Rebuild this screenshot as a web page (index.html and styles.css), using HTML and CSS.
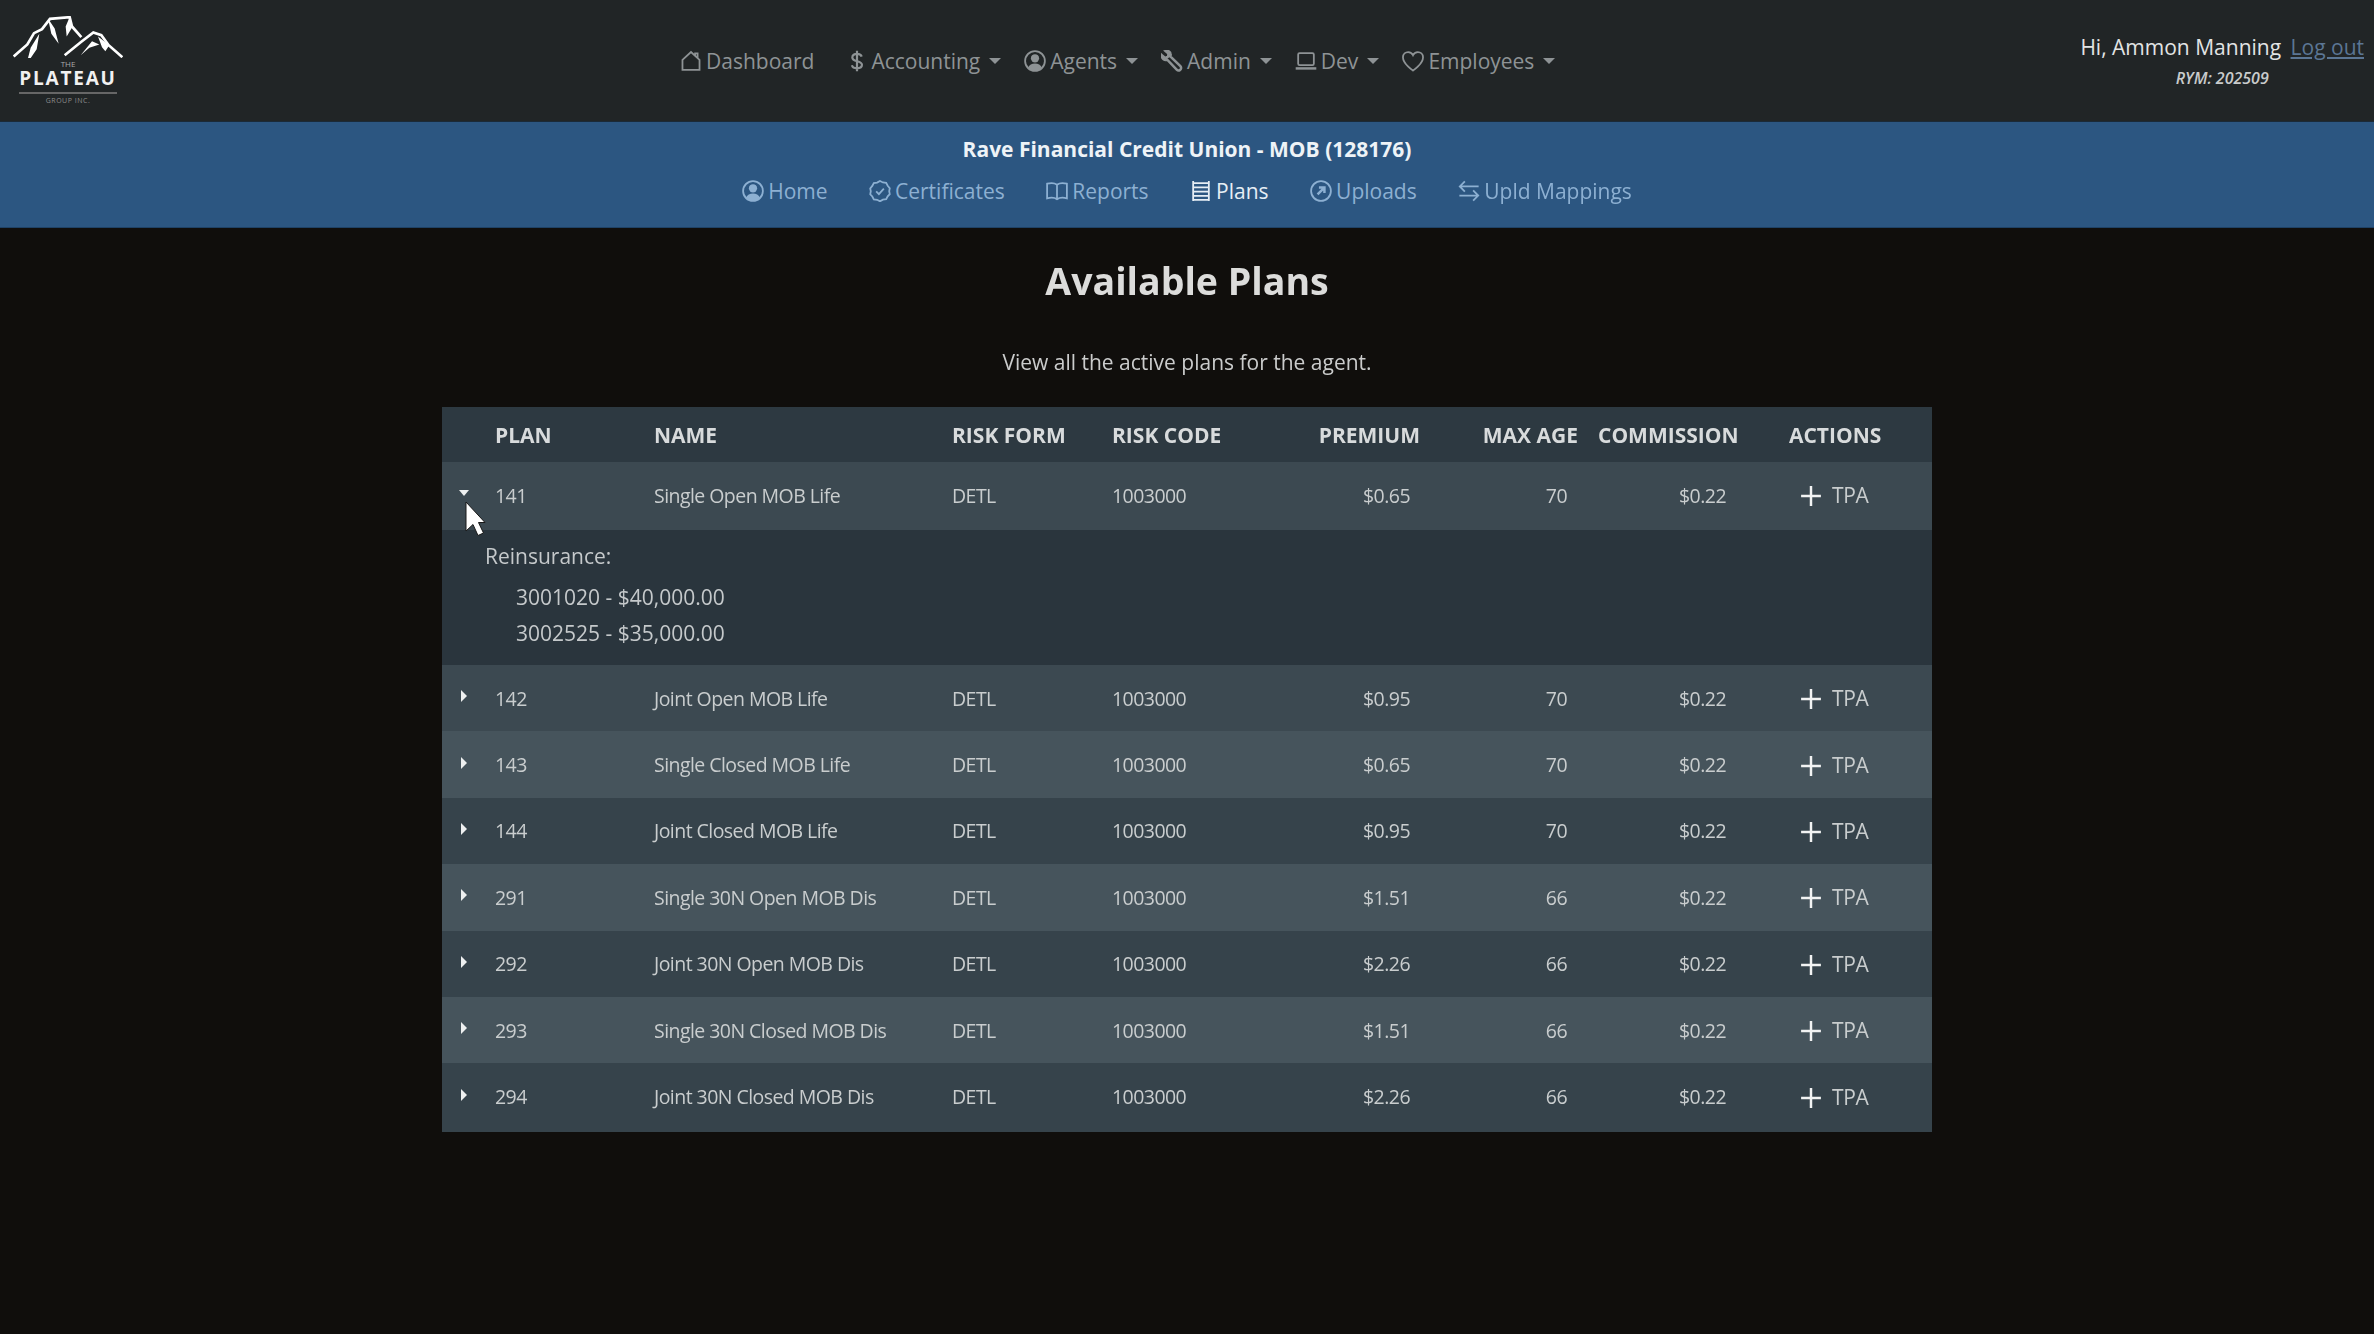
FILE: index.html
```html
<!DOCTYPE html>
<html>
<head>
<meta charset="utf-8">
<title>Available Plans</title>
<link rel="stylesheet" href="styles.css">
</head>
<body>
<svg class="sprites" width="0" height="0">
  <symbol id="i-house" viewBox="0 0 16 16"><path d="M1.800 7.200 8 1.500l6.200 5.700V14.500H1.800zM11 4.200V2.400h1.800v3.400"/></symbol>
  <symbol id="i-dollar" viewBox="0 0 16 16"><path d="M11.400 4.800C11 3.300 9.600 2.800 8 2.800c-1.900 0-3.400.9-3.400 2.600 0 3.600 7 2 7 5.400 0 1.700-1.600 2.500-3.600 2.500-1.800 0-3.300-.7-3.700-2.200M8 .5v15"/></symbol>
  <symbol id="i-person" viewBox="0 0 16 16"><circle cx="8" cy="8" r="7.200"/><circle class="solid" cx="8" cy="6" r="3"/><path class="solid" d="M2.800 13c.9-2.200 3-3.200 5.200-3.200s4.300 1 5.200 3.200A7.200 7.200 0 0 1 8 15.200 7.200 7.200 0 0 1 2.800 13z"/></symbol>
  <symbol id="i-wrench" viewBox="0 0 16 16"><path class="thick" d="M.6 3.700 3 5.700l2.200-.9.2-2.200L3.300.8c1.600-.5 3.500.3 3.700 2.100.1.700 0 1.300-.2 1.800l7.300 7c.9 1 .6 2.200-.2 2.800-.8.600-1.800.5-2.500-.2L4.500 7.100C2.400 7.700.3 6.200.6 3.700z"/></symbol>
  <symbol id="i-laptop" viewBox="0 0 16 16"><rect x="2.300" y="2.300" width="11.400" height="8.700" rx="1"/><path class="thick" d="M.5 13.400h15"/></symbol>
  <symbol id="i-heart" viewBox="0 0 16 16"><path d="M8 15S.7 10.200.7 5.300C.7 2.800 2.600 1.500 4.500 1.500 6 1.500 7.300 2.300 8 3.800c.7-1.500 2-2.300 3.500-2.300 1.900 0 3.800 1.300 3.800 3.800C15.300 10.200 8 15 8 15z"/></symbol>
  <symbol id="i-check" viewBox="0 0 16 16"><path d="M8 .7l2.100 1.100 2.400.3 1.100 2.100 1.500 1.800-.4 2.100.4 2.200-1.500 1.600-1.100 2.100-2.400.3L8 15.500l-2.100-1.100-2.400-.3-1.100-2.100-1.500-1.600.4-2.200-.4-2.100 1.500-1.800 1.100-2.100 2.400-.3z"/><path d="M5.200 8.300l2 2 3.600-4"/></symbol>
  <symbol id="i-book" viewBox="0 0 16 16"><path d="M8 3.400C6.500 2.300 3.300 2.100.8 2.700v10.600c2.500-.6 5.700-.4 7.200.7 1.500-1.100 4.700-1.300 7.200-.7V2.700C12.700 2.100 9.500 2.300 8 3.400zM8 3.400V14"/></symbol>
  <symbol id="i-ladder" viewBox="0 0 16 16"><path d="M2.300.8v14.400M13.700.8v14.400M2.300 2.200h11.400M2.300 5.300h11.400M2.300 8.400h11.400M2.300 11.500h11.400M2.300 14.500h11.400"/></symbol>
  <symbol id="i-upload" viewBox="0 0 16 16"><circle cx="8" cy="8" r="7.200"/><path class="thick" d="M5.500 10.500 10.300 5.700M6.500 5.500h4v4"/></symbol>
  <symbol id="i-swap" viewBox="0 0 16 16"><path d="M15 4.700H1.500M5 1 1.300 4.700 5 8.400M1 11.300h13.500M11 7.600l3.700 3.700L11 15"/></symbol>
  <symbol id="i-plus" viewBox="0 0 16 16"><path d="M8 .8v14.400M.8 8h14.400"/></symbol>
</svg>

<div class="page">
  <header class="topbar">
    <a class="logo">
      <svg class="logo-mark" viewBox="45 35 330 125">
        <path class="ridge" d="M47 156 88 120 108 86 132 74 156 43 215 38 222 66 250 98"/>
        <path class="ridge" d="M200 152 250 112 286 84 310 92 332 122 373 158"/>
        <path class="shard" d="M85 180 98 130 124 88 116 134zM150 42 170 72 182 118 160 88zM214 40 203 66 206 96 224 66zM248 152 282 110 304 120 274 130zM300 96 312 128 322 140 334 122z"/>
      </svg>
      <span class="logo-the">THE</span>
      <span class="logo-name">PLATEAU</span>
      <span class="logo-group">GROUP INC.</span>
    </a>
    <nav class="main-nav">
      <a class="nav-link nav-first"><svg class="ico"><use href="#i-house"/></svg>Dashboard</a>
      <a class="nav-link"><svg class="ico ico-dollar"><use href="#i-dollar"/></svg>Accounting<i class="drop"></i></a>
      <a class="nav-link"><svg class="ico"><use href="#i-person"/></svg>Agents<i class="drop"></i></a>
      <a class="nav-link"><svg class="ico"><use href="#i-wrench"/></svg>Admin<i class="drop"></i></a>
      <a class="nav-link"><svg class="ico"><use href="#i-laptop"/></svg>Dev<i class="drop"></i></a>
      <a class="nav-link"><svg class="ico"><use href="#i-heart"/></svg>Employees<i class="drop"></i></a>
    </nav>
    <div class="user">
      <div>Hi, Ammon Manning <a class="logout">Log out</a></div>
      <div class="rym">RYM: 202509</div>
    </div>
  </header>

  <section class="subbar">
    <div class="agent">Rave Financial Credit Union - MOB (128176)</div>
    <nav class="tabs">
      <a class="tab"><svg class="ico"><use href="#i-person"/></svg>Home</a>
      <a class="tab"><svg class="ico"><use href="#i-check"/></svg>Certificates</a>
      <a class="tab"><svg class="ico"><use href="#i-book"/></svg>Reports</a>
      <a class="tab active"><svg class="ico"><use href="#i-ladder"/></svg>Plans</a>
      <a class="tab"><svg class="ico"><use href="#i-upload"/></svg>Uploads</a>
      <a class="tab"><svg class="ico"><use href="#i-swap"/></svg>Upld Mappings</a>
    </nav>
  </section>

  <main class="content">
    <h1>Available Plans</h1>
    <p class="lead">View all the active plans for the agent.</p>

    <div class="table-wrap">
      <table class="plans">
        <colgroup>
          <col class="c-toggle"><col class="c-plan"><col class="c-name"><col class="c-form"><col class="c-code"><col class="c-prem"><col class="c-age"><col class="c-comm"><col class="c-act">
        </colgroup>
        <thead>
          <tr><th></th><th>PLAN</th><th>NAME</th><th>RISK FORM</th><th>RISK CODE</th><th class="num">PREMIUM</th><th class="num">MAX AGE</th><th class="num">COMMISSION</th><th class="act">ACTIONS</th></tr>
        </thead>
        <tbody>
          <tr class="mid tall"><td><i class="tog open"></i></td><td>141</td><td>Single Open MOB Life</td><td>DETL</td><td>1003000</td><td class="prem">$0.65</td><td class="age">70</td><td class="comm">$0.22</td><td class="tpa"><svg class="plus"><use href="#i-plus"/></svg>TPA</td></tr>
          <tr class="detail"><td colspan="9">
            <div class="re-title">Reinsurance:</div>
            <div class="re-item">3001020 - $40,000.00</div>
            <div class="re-item">3002525 - $35,000.00</div>
          </td></tr>
          <tr class="mid"><td><i class="tog"></i></td><td>142</td><td>Joint Open MOB Life</td><td>DETL</td><td>1003000</td><td class="prem">$0.95</td><td class="age">70</td><td class="comm">$0.22</td><td class="tpa"><svg class="plus"><use href="#i-plus"/></svg>TPA</td></tr>
          <tr class="light"><td><i class="tog"></i></td><td>143</td><td>Single Closed MOB Life</td><td>DETL</td><td>1003000</td><td class="prem">$0.65</td><td class="age">70</td><td class="comm">$0.22</td><td class="tpa"><svg class="plus"><use href="#i-plus"/></svg>TPA</td></tr>
          <tr class="dark"><td><i class="tog"></i></td><td>144</td><td>Joint Closed MOB Life</td><td>DETL</td><td>1003000</td><td class="prem">$0.95</td><td class="age">70</td><td class="comm">$0.22</td><td class="tpa"><svg class="plus"><use href="#i-plus"/></svg>TPA</td></tr>
          <tr class="light"><td><i class="tog"></i></td><td>291</td><td>Single 30N Open MOB Dis</td><td>DETL</td><td>1003000</td><td class="prem">$1.51</td><td class="age">66</td><td class="comm">$0.22</td><td class="tpa"><svg class="plus"><use href="#i-plus"/></svg>TPA</td></tr>
          <tr class="dark"><td><i class="tog"></i></td><td>292</td><td>Joint 30N Open MOB Dis</td><td>DETL</td><td>1003000</td><td class="prem">$2.26</td><td class="age">66</td><td class="comm">$0.22</td><td class="tpa"><svg class="plus"><use href="#i-plus"/></svg>TPA</td></tr>
          <tr class="light"><td><i class="tog"></i></td><td>293</td><td>Single 30N Closed MOB Dis</td><td>DETL</td><td>1003000</td><td class="prem">$1.51</td><td class="age">66</td><td class="comm">$0.22</td><td class="tpa"><svg class="plus"><use href="#i-plus"/></svg>TPA</td></tr>
          <tr class="dark last"><td><i class="tog"></i></td><td>294</td><td>Joint 30N Closed MOB Dis</td><td>DETL</td><td>1003000</td><td class="prem">$2.26</td><td class="age">66</td><td class="comm">$0.22</td><td class="tpa"><svg class="plus"><use href="#i-plus"/></svg>TPA</td></tr>
        </tbody>
      </table>
      <svg class="cursor" viewBox="0 0 21 35"><path d="M1 1v29l7-6.500 5 11 5.500-2.500-5-10.500H20z"/></svg>
    </div>
  </main>
</div>
</body>
</html>
```

FILE: styles.css
```css
html, body { margin: 0; height: 100%; }
body { background: #100e0c; color: #d4d7d8; font-family: "Open Sans", "Liberation Sans", sans-serif; font-size: 21px; overflow: hidden; }
.sprites { position: absolute; }
.page { height: 1334px; filter: blur(0.7px); }

/* icons */
.ico { width: 22px; height: 22px; margin-right: 4px; flex: none; fill: none; stroke: currentColor; stroke-width: 1.300; }
.ico-dollar { margin-right: 3px; stroke-width: 1.600; }
.solid { fill: currentColor; stroke: none; }
.thick { stroke-width: 1.800; }

/* top bar */
.topbar { display: flex; align-items: center; height: 122px; background: #212526; border-bottom: 1px solid #1b2a38; box-sizing: border-box; }
.logo { display: flex; flex-direction: column; align-items: center; width: 114px; margin-left: 11px; color: #f1f1f1; }
.logo-mark { width: 110px; height: 42px; margin-top: 3px; }
.ridge { fill: none; stroke: #fff; stroke-width: 8; }
.shard { fill: #fff; }
.logo-the { font-size: 8px; line-height: 9px; color: #aaa; margin-top: 1px; }
.logo-name { font-size: 19px; line-height: 21px; font-weight: 700; letter-spacing: 1.800px; border-bottom: 2px solid #666; padding-bottom: 3px; }
.logo-group { font-size: 7px; line-height: 14px; color: #8d8d8d; letter-spacing: .5px; }

.main-nav { display: flex; align-items: center; margin-left: 555px; color: #8e9395; }
.nav-link { display: flex; align-items: center; margin-right: 23px; white-space: nowrap; }
.nav-first { margin-right: 32px; }
.drop { width: 0; height: 0; margin-left: 9px; border: 6px solid transparent; border-top-color: #8e9395; border-bottom: 0; }
.user { margin-left: auto; margin-right: 10px; text-align: center; color: #e2e4e4; }
.logout { color: #5b7694; text-decoration: underline; margin-left: 4px; }
.rym { font-size: 16px; font-style: italic; font-weight: 600; margin-top: 6px; color: #c9cbcb; }

/* blue bar */
.subbar { height: 106px; box-sizing: border-box; background: #2c5681; border-bottom: 1px solid #1f4266; text-align: center; padding-top: 13px; }
.agent { line-height: 28px; font-weight: 700; color: #eef3f7; }
.tabs { display: flex; justify-content: center; gap: 41.500px; margin-top: 14px; line-height: 28px; color: #8db0d2; }
.tab { display: flex; align-items: center; }
.tab.active { color: #e6eef5; }

/* page body */
.content { display: flex; flex-direction: column; align-items: center; }
h1 { margin: 30px 0 0; font-size: 37.500px; line-height: 46px; font-weight: 700; color: #dcdcdb; }
.lead { margin: 44px 0 0; line-height: 28px; color: #cbcccc; }

/* plans table */
.table-wrap { position: relative; width: 1490px; margin-top: 31px; }
.plans { width: 100%; table-layout: fixed; border-collapse: collapse; font-size: 19.500px; letter-spacing: -.55px; color: #c9cdce; }
.c-toggle { width: 43px; } .c-plan { width: 159px; } .c-name { width: 298px; }
.c-form { width: 160px; } .c-code { width: 160px; } .c-prem { width: 168px; }
.c-age { width: 158px; } .c-comm { width: 160px; } .c-act { width: 184px; }
.plans th, .plans td { padding: 0 10px; text-align: left; white-space: nowrap; }
.plans thead tr { height: 55px; background: #2d3941; }
.plans th { font-size: 21px; font-weight: 700; letter-spacing: 0; color: #d8dbdc; }
.plans tbody tr { height: 66.400px; }
.plans tr.tall { height: 68px; }
.plans tr.tall td { padding-bottom: 2px; }
.plans tr.last { height: 69px; }
.plans tr.last td { padding-bottom: 2px; }
.plans th.num { text-align: right; }
.plans th.act { padding-left: 41px; }
.mid { background: #3c4951; }
.light { background: #46545c; }
.dark { background: #36434b; }
.plans td.prem { text-align: right; padding-right: 20px; }
.plans td.age { text-align: right; padding-right: 21px; }
.plans td.comm { text-align: right; padding-right: 22px; }
.plans td.tpa { padding-left: 52px; font-size: 21px; letter-spacing: -.3px; }
.plus { width: 22px; height: 22px; margin-right: 10px; vertical-align: -4px; fill: none; stroke: #f2f3f3; stroke-width: 1.800; }
.tog { display: block; width: 0; height: 0; margin: -4px 0 0 9px; border-style: solid; border-color: transparent; border-width: 6px 0 6px 6px; border-left-color: #eef0f0; }
.tog.open { margin-left: 7px; border-width: 6px 5px 0; border-top-color: #eef0f0; border-left-color: transparent; }

.plans tr.detail { height: 135px; background: #2a353d; }
.plans tr.detail td { padding: 0 0 6px 43px; font-size: 21px; letter-spacing: 0; color: #c5c9cb; }
.re-title { line-height: 36px; margin-bottom: 5px; }
.re-item { line-height: 36px; margin-left: 31px; }

.cursor { position: absolute; left: 23px; top: 94px; width: 21px; height: 35px; fill: #fff; stroke: #1a1a1a; stroke-width: 1; }
```
